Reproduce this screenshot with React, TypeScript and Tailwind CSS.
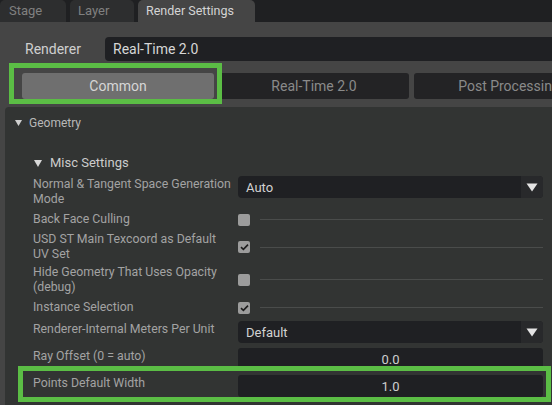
import React from "react";

const font = { fontFamily: 'Roboto, "Liberation Sans", sans-serif' };

function Check({ checked }: { checked?: boolean }) {
  return (
    <div className="flex items-center w-full">
      <div className="w-[12px] h-[12px] rounded-[2px] bg-[#9c9c9c] flex items-center justify-center shrink-0">
        {checked && (
          <svg width="9" height="8" viewBox="0 0 9 8">
            <path d="M1 4.2 L3.4 6.4 L8 1.6" fill="none" stroke="#1c1c1c" strokeWidth="1.6" />
          </svg>
        )}
      </div>
      <div className="ml-[10px] flex-1 h-px bg-[#4a4c4b]" />
    </div>
  );
}

function Dropdown({ value }: { value: string }) {
  return (
    <div className="flex w-full h-[22px] rounded-[4px] bg-[#1f2023] overflow-hidden">
      <div className="flex-1 pl-[8px] pt-[1px] flex items-center text-[13px] text-[#d2d2d2]">{value}</div>
      <div className="w-[22px] bg-[#28292b] flex items-center justify-center">
        <svg width="12" height="9" viewBox="0 0 12 9">
          <path d="M0.5 0.5 L11.5 0.5 L6 8.5 Z" fill="#e4e4e4" />
        </svg>
      </div>
    </div>
  );
}

function NumInput({ value }: { value: string }) {
  return (
    <div className="w-full h-[22px] rounded-[3px] bg-[#1f2023] pt-[1px] flex items-center justify-center text-[13px] text-[#cfcfcf]">
      {value}
    </div>
  );
}

function Row({
  label,
  h,
  center,
  children,
}: {
  label: React.ReactNode;
  h: string;
  center?: boolean;
  children: React.ReactNode;
}) {
  return (
    <div className={`flex ${center ? "items-center" : "items-start"} ${h}`}>
      <div className="w-[205px] shrink-0 whitespace-nowrap text-[12.3px] leading-[15px] text-[#a3a3a3]">{label}</div>
      <div className="w-[305px] shrink-0 flex items-center">{children}</div>
    </div>
  );
}

export default function App() {
  return (
    <div className="relative w-[552px] h-[405px] overflow-hidden bg-[#454545]" style={font}>
      {/* tab bar */}
      <div className="flex items-end h-[22px] bg-[#1f2022] gap-[4px]">
        <div className="w-[66px] h-[22px] rounded-t-[5px] bg-[#2d2e2f] pl-[9px] flex items-center text-[13px] text-[#808080]">
          Stage
        </div>
        <div className="w-[64px] h-[22px] rounded-t-[5px] bg-[#2d2e2f] pl-[8px] flex items-center text-[13px] text-[#808080]">
          Layer
        </div>
        <div className="w-[117px] h-[22px] rounded-t-[5px] bg-[#454545] pl-[8px] flex items-center text-[12.5px] text-[#d4d4d4]">
          Render Settings
        </div>
      </div>

      {/* renderer row */}
      <div className="flex items-center mt-[15px] h-[24px]">
        <div className="w-[105px] pl-[25px] text-[14px] text-[#cfcfcf]">Renderer</div>
        <div className="flex-1 h-[24px] rounded-l-[4px] bg-[#1f2023] pl-[8px] flex items-center text-[14px] text-[#d6d6d6]">
          Real-Time 2.0
        </div>
      </div>

      {/* sub tabs */}
      <div className="flex mt-[12px] pl-[22px] h-[26px]">
        <div className="w-[192px] shrink-0 rounded-[3px] bg-[#6f6f6f] flex items-center justify-center text-[14px] text-[#d6d6d6]">
          Common
        </div>
        <div className="w-[190px] shrink-0 ml-[5px] rounded-[3px] bg-[#232325] flex items-center justify-center text-[14px] text-[#8a8a8a]">
          Real-Time 2.0
        </div>
        <div className="w-[190px] shrink-0 ml-[5px] rounded-[3px] bg-[#232325] flex items-center justify-center text-[14px] text-[#8a8a8a] whitespace-nowrap">
          Post Processing
        </div>
      </div>

      {/* geometry frame */}
      <div className="ml-[5px] mt-[8px] h-[320px] rounded-tl-[4px] bg-[#323433]">
        <div className="flex items-center h-[30px] pl-[10px] pt-[2px]">
          <svg width="7" height="6" viewBox="0 0 7 6">
            <path d="M0 0 L7 0 L3.5 6 Z" fill="#d0d0d0" />
          </svg>
          <span className="ml-[7px] text-[12px] text-[#b8b8b8]">Geometry</span>
        </div>
        <div className="flex items-center h-[22px] mt-[15px] pl-[29px]">
          <svg width="8" height="7" viewBox="0 0 8 7">
            <path d="M0 0 L8 0 L4 7 Z" fill="#d8d8d8" />
          </svg>
          <span className="ml-[8px] text-[13px] text-[#cccccc]">Misc Settings</span>
        </div>
        <div className="pl-[28px] mt-[2px] flex flex-col">
          <Row label={<span className="block pt-[1px]">Normal &amp; Tangent Space Generation<br />Mode</span>} h="h-[32px]">
            <Dropdown value="Auto" />
          </Row>
          <Row label="Back Face Culling" h="h-[23px]" center>
            <Check />
          </Row>
          <Row label={<>USD ST Main Texcoord as Default<br />UV Set</>} h="h-[32px]" center>
            <Check checked />
          </Row>
          <Row label={<>Hide Geometry That Uses Opacity<br />(debug)</>} h="h-[33px]" center>
            <Check />
          </Row>
          <Row label="Instance Selection" h="h-[23px]" center>
            <Check checked />
          </Row>
          <div className="h-[2px]" />
          <Row label={<span className="block pt-[1px]">Renderer-Internal Meters Per Unit</span>} h="h-[27px]">
            <Dropdown value="Default" />
          </Row>
          <Row label={<span className="block pt-[1px]">Ray Offset (0 = auto)</span>} h="h-[27px]">
            <NumInput value="0.0" />
          </Row>
          <Row label={<span className="block pt-[1px]">Points Default Width</span>} h="h-[27px]">
            <NumInput value="1.0" />
          </Row>
        </div>
      </div>

      {/* green annotation boxes */}
      <div className="absolute left-[9px] top-[63px] w-[213px] h-[41px] border-[5px] border-[#5bbd45]" />
      <div className="absolute left-[18px] top-[366px] w-[533px] h-[36px] border-[5px] border-[#5bbd45]" />
    </div>
  );
}
